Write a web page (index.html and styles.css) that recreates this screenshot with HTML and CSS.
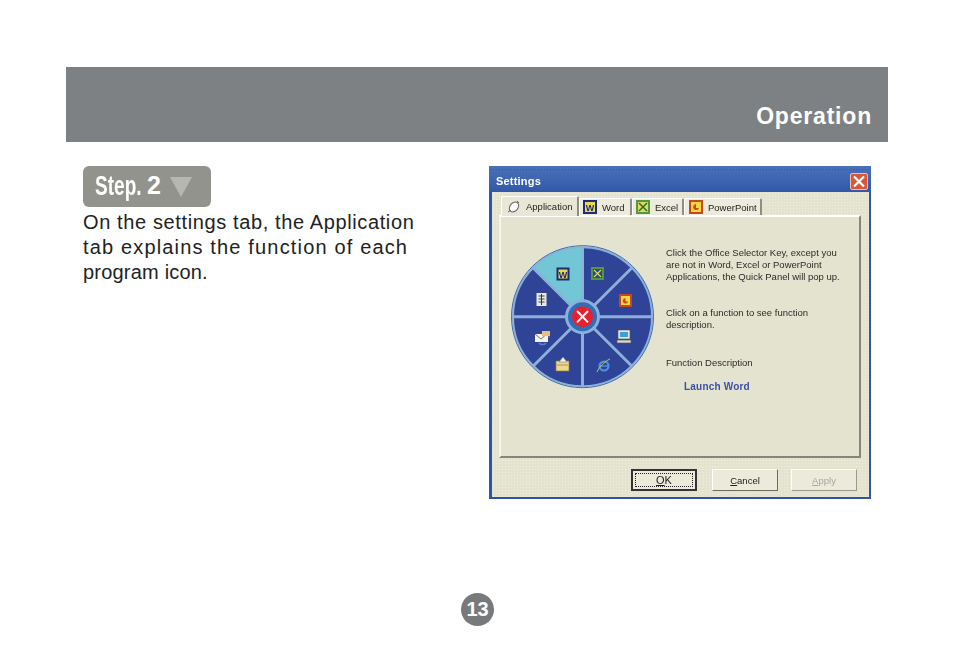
FILE: index.html
```html
<!DOCTYPE html>
<html lang="en">
<head>
<meta charset="utf-8">
<title>Operation</title>
<link rel="stylesheet" href="styles.css">
</head>
<body>
<div class="page">
  <header class="banner"><h1 class="banner-title">Operation</h1></header>
  <main class="content">
    <section class="intro">
      <div class="step"><span class="step-word">Step.</span><span class="step-num">2</span><span class="step-arrow"></span></div>
      <p class="intro-text"><span class="l1">On the settings tab, the Application</span><span class="l2">tab explains the function of each</span><span class="l3">program icon.</span></p>
    </section>
    <section class="dialog">
      <div class="titlebar">
        <span class="title">Settings</span>
        <span class="close"><svg viewBox="0 0 18 17" width="18" height="17"><path d="M4 3.5 14 13.5M14 3.5 4 13.5" stroke="#fff" stroke-width="2.2" fill="none"/></svg></span>
      </div>
      <div class="client">
        <div class="tabs">
          <div class="tab tab-active"><svg class="tab-icon" viewBox="0 0 14 14"><ellipse cx="7" cy="7" rx="4" ry="5.5" transform="rotate(40 7 7)" fill="#fff" stroke="#666"/><path d="M1 12 4 10M10 1l2 2" stroke="#666" fill="none"/></svg>Application</div>
          <div class="tab tab-word"><svg class="tab-icon" viewBox="0 0 14 14"><rect width="14" height="14" fill="#1c2a78"/><rect x="2" y="2" width="10" height="10" fill="#e8d84c"/><text x="7" y="11" class="icon-letter" fill="#1c2a78">W</text></svg>Word</div>
          <div class="tab tab-excel"><svg class="tab-icon" viewBox="0 0 14 14"><rect width="14" height="14" fill="#4e9a3c"/><rect x="2" y="2" width="10" height="10" fill="#e0d860"/><path d="M3 3 11 11M11 3 3 11" stroke="#2d6a2a" stroke-width="1.5"/></svg>Excel</div>
          <div class="tab tab-ppt"><svg class="tab-icon" viewBox="0 0 14 14"><rect width="14" height="14" fill="#c8481e"/><rect x="2" y="2" width="10" height="10" fill="#efd840"/><path d="M7 4a3 3 0 1 0 3 4H7z" fill="#c8481e"/></svg>PowerPoint</div>
        </div>
        <div class="panel">
          <svg class="wheel" viewBox="0 0 155 155" width="155" height="155">
            <circle cx="77.5" cy="77.7" r="69.500" fill="#2f4496" stroke="#8db0da" stroke-width="2"/>
            <circle cx="77.5" cy="77.7" r="71" fill="none" stroke="#3d6cb0" stroke-width="1"/>
            <path d="M77.5 77.7 28.500 29A69 69 0 0 1 77.5 8.700z" fill="#72c7d6"/>
            <g stroke="#8db0da" stroke-width="3">
              <path d="M77.5 8V147.400M8 77.7H147M28 28.700 127 127.200M127 28.700 28 127.200"/>
            </g>
            <circle cx="77.5" cy="77.7" r="16" fill="#2f6fb8" stroke="#8db0da" stroke-width="3"/>
            <circle cx="77.5" cy="77.7" r="10.5" fill="#e8202e"/>
            <path d="M72 72 83 83.400M83 72 72 83.400" stroke="#fff" stroke-width="2"/>

            <g transform="translate(51.500 28.500)"><rect width="13" height="13" fill="#1c2a78"/><rect x="2" y="2" width="9" height="9" fill="#e8d84c"/><text x="6.500" y="10" class="icon-letter" fill="#1c2a78">W</text></g>
            <g transform="translate(86 28)"><rect width="13" height="13" fill="#4e9a3c"/><rect x="2" y="2" width="9" height="9" fill="#2f4496"/><path d="M3 3 10 10M10 3 3 10" stroke="#d8d860" stroke-width="1.200"/></g>
            <g transform="translate(114 55)"><rect width="13" height="13" fill="#c8481e"/><rect x="2" y="2" width="9" height="9" fill="#efd840"/><path d="M6.500 4a2.800 2.800 0 1 0 2.800 3.500H6.500z" fill="#c8481e"/></g>
            <g transform="translate(31.500 54)"><rect width="10" height="13" fill="#e8e8e0"/><path d="M2 3H8M2 6H8M2 9H8" stroke="#444" stroke-width="1.200"/><path d="M5 1V12" stroke="#333"/></g>
            <g transform="translate(30 92)"><rect y="3" width="13" height="8" fill="#f4f2e6"/><path d="M0 3 6 8 14 1V7" fill="none" stroke="#777"/><rect x="7" y="0" width="8" height="5" fill="#e8c080"/><path d="M4 12a4 3 0 0 0 7 0" stroke="#5a80d0" stroke-width="1.500" fill="none"/></g>
            <g transform="translate(51 119)"><path d="M0 3H13V13H0z" fill="#eed98a" stroke="#8a7a40" stroke-width=".7"/><path d="M3 4 7 -1 11 4z" fill="#f4f4f4" stroke="#777" stroke-width=".6"/><path d="M1 7H12" stroke="#a89550"/></g>
            <g transform="translate(92 120)"><circle cx="7" cy="7" r="4.500" fill="none" stroke="#4f8fe0" stroke-width="2.200"/><path d="M3 7H11" stroke="#4f8fe0" stroke-width="1.400"/><path d="M0 13C2 8 8 2 13 0" fill="none" stroke="#c8d070" stroke-width=".9"/></g>
            <g transform="translate(112 91)"><rect x="1" y="0" width="12" height="9" fill="#e4e4e4" stroke="#555" stroke-width=".6"/><rect x="3" y="2" width="8" height="5" fill="#3aa0d8"/><rect x="0" y="10" width="14" height="3" fill="#d4d4d4" stroke="#555" stroke-width=".6"/></g>
          </svg>
          <div class="info">
            <p class="info-para">Click the Office Selector Key, except you<br>are not in Word, Excel or PowerPoint<br>Applications, the Quick Panel will pop up.</p>
            <p class="info-para info-gap">Click on a function to see function<br>description.</p>
            <p class="info-para info-label">Function Description</p>
            <p class="info-desc">Launch Word</p>
          </div>
        </div>
        <div class="buttons">
          <div class="btn btn-default"><span class="btn-focus"><u>O</u>K</span></div>
          <div class="btn"><span><u>C</u>ancel</span></div>
          <div class="btn btn-disabled"><span><u>A</u>pply</span></div>
        </div>
      </div>
    </section>
  </main>
  <div class="page-num">13</div>
</div>
</body>
</html>
```
FILE: styles.css
```css
* { box-sizing: border-box; }
html, body { margin: 0; background: #fff; }
.page {
  width: 954px;
  height: 665px;
  padding-top: 67px;
  overflow: hidden;
  font-family: "Liberation Sans", Arial, sans-serif;
}
.banner {
  width: 822px;
  height: 75px;
  margin-left: 66px;
  background: #7e8183;
  display: flex;
  justify-content: flex-end;
  align-items: flex-end;
  padding: 0 16px 13px 0;
}
.banner-title {
  margin: 0;
  color: #fff;
  font-size: 23px;
  line-height: 26px;
  font-weight: 700;
  letter-spacing: .8px;
}
.content {
  display: flex;
  align-items: flex-start;
  padding: 24px 0 0 83px;
}
.intro { width: 406px; flex: none; }
.step {
  width: 128px;
  height: 41px;
  background: #92938d;
  border-radius: 6px;
  display: flex;
  align-items: center;
  padding: 0 0 2px 12px;
  color: #fff;
  font-weight: 700;
}
.step-word {
  font-size: 28px;
  width: 68px;
  margin-right: -16px;
  white-space: nowrap;
  display: inline-block;
  transform: scaleX(.68);
  transform-origin: left center;
}
.step-num { font-size: 25px; margin-right: 9px; }
.step-arrow {
  width: 0;
  height: 0;
  margin-top: 2px;
  border-left: 11px solid transparent;
  border-right: 11px solid transparent;
  border-top: 20px solid #b6b7b2;
}
.intro-text {
  margin: 3px 0 0;
  font-size: 20px;
  line-height: 25px;
  color: #222;
}
.intro-text span { display: block; white-space: nowrap; }
.l1 { letter-spacing: .62px; }
.l2 { letter-spacing: 1.16px; }
.l3 { letter-spacing: .2px; }
.dialog {
  width: 382px;
  height: 333px;
  flex: none;
  background: #2f54a8;
  padding: 0 2px 2px 3px;
  display: flex;
  flex-direction: column;
  filter: blur(.3px);
}
.titlebar {
  height: 26px;
  flex: none;
  margin: 0 -2px 0 -3px;
  padding: 0 3px 0 7px;
  display: flex;
  align-items: center;
  justify-content: space-between;
  background:
    radial-gradient(circle, rgba(30, 60, 130, .45) 35%, transparent 40%) 0 2px / 3px 3px repeat-x,
    linear-gradient(#4a70b8, #3c63b0 60%, #3158a8);
}
.title {
  color: #fff;
  font: 700 11px "Liberation Sans", sans-serif;
  letter-spacing: .2px;
  margin-top: 3px;
}
.close {
  width: 18px;
  height: 17px;
  margin-top: 4px;
  background: #d8573a;
  border: 1px solid #f0c0a8;
  border-radius: 2px;
  display: flex;
}
.close svg { flex: none; margin: -1px; }
.client {
  flex: 1;
  background: radial-gradient(circle, #f0efdf 30%, transparent 40%) 0 0 / 3px 3px, #e4e3d0;
  padding: 4px 8px 0 7px;
  display: flex;
  flex-direction: column;
}
.tabs {
  display: flex;
  align-items: flex-end;
  height: 20px;
  padding-left: 2px;
  position: relative;
  z-index: 1;
  margin-bottom: -1px;
}
.tab {
  height: 17px;
  display: flex;
  align-items: center;
  gap: 5px;
  background: #ecebdc;
  border-top: 1px solid #fff;
  border-left: 1px solid #fff;
  border-right: 2px solid #8e8e84;
  font-size: 9.500px;
  color: #222;
  padding: 0 3px 0 3px;
  border-radius: 2px 2px 0 0;
  margin-bottom: 1px;
}
.tab-active {
  height: 20px;
  width: 78px;
  margin-bottom: 0;
  padding-left: 5px;
  background: #e8e7d6;
  position: relative;
}
.tab-word { width: 53px; }
.tab-excel { width: 52px; }
.tab-ppt { width: 78px; padding-left: 4px; }
.tab-icon { width: 14px; height: 14px; flex: none; }
.icon-letter {
  font: 700 9px "Liberation Sans", sans-serif;
  text-anchor: middle;
}
.panel {
  height: 243px;
  flex: none;
  background: #e4e3d0;
  border-top: 2px solid #fff;
  border-left: 2px solid #f6f5ec;
  border-right: 2px solid #85857c;
  border-bottom: 2px solid #85857c;
  padding: 22px 0 0 4px;
  display: flex;
  align-items: flex-start;
}
.wheel { flex: none; display: block; }
.info {
  margin-left: 6px;
  padding-top: 8px;
  font-size: 9.500px;
  line-height: 12px;
  color: #2a2a2a;
  white-space: nowrap;
}
.info-para { margin: 0; }
.info-gap { margin-top: 24px; }
.info-label { margin-top: 26px; }
.info-desc {
  margin: 12px 0 0 18px;
  font-weight: 700;
  color: #3a4fa8;
  font-size: 10px;
  letter-spacing: .2px;
}
.buttons {
  display: flex;
  justify-content: flex-end;
  gap: 15px;
  margin-top: 11px;
  padding-right: 4px;
}
.btn {
  width: 66px;
  height: 22px;
  background: #eceadb;
  border: 1px solid;
  border-color: #fff #6a6a60 #6a6a60 #fff;
  font-size: 9.500px;
  color: #222;
  display: flex;
  align-items: center;
  justify-content: center;
}
.btn-default { border: 2px solid #333; }
.btn-focus {
  width: 58px;
  height: 14px;
  line-height: 12px;
  font-size: 11px;
  border: 1px dotted #222;
  text-align: center;
}
.btn-disabled {
  margin-left: -2px;
  color: #a8a89a;
  border-color: #fff #9a9a8e #9a9a8e #fff;
}
.page-num {
  width: 33px;
  height: 33px;
  margin: 94px 0 0 461px;
  border-radius: 50%;
  background: #77797b;
  color: #fff;
  font-size: 20px;
  font-weight: 700;
  line-height: 33px;
  text-align: center;
}
```
